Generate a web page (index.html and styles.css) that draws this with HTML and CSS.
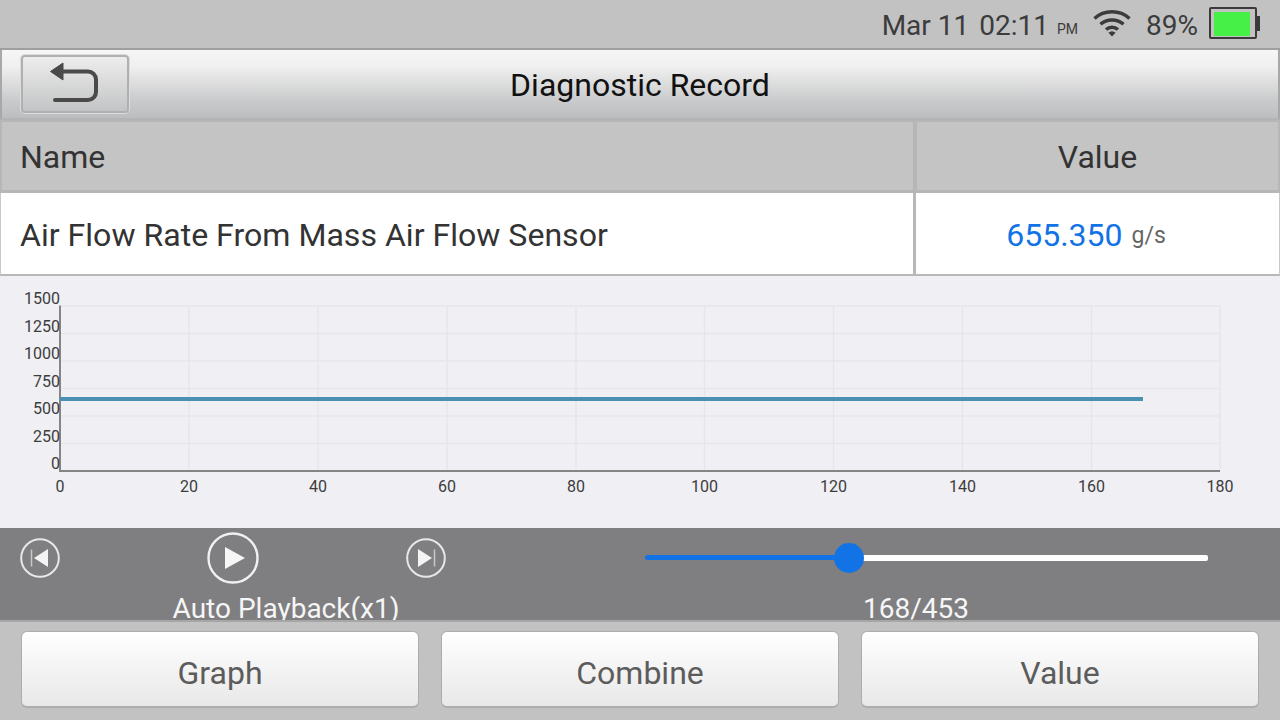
FILE: index.html
```html
<!DOCTYPE html>
<html lang="en">
<head>
<meta charset="utf-8">
<title>Diagnostic Record</title>
<link rel="stylesheet" href="styles.css">
</head>
<body>
<div class="screen">
  <header class="status">
    <span class="date">Mar 11</span>
    <span class="time">02:11</span>
    <span class="ampm">PM</span>
    <svg class="wifi" width="42" height="32" viewBox="0 0 42 32" aria-hidden="true">
      <g fill="none" stroke="#3c3c3c" stroke-width="3.4">
        <path d="M3.5 13.5C13 4.5 29 4.500 38.500 13.500"/>
        <path d="M9.500 19.200C15.500 13.500 26.500 13.500 32.500 19.200"/>
        <path d="M15 24.500C18.500 21.500 23.500 21.500 27 24.500"/>
      </g>
      <path d="M21 32l-3.600-3.800a5 5 0 0 1 7.200 0z" fill="#3c3c3c" transform="translate(0 -.5)"/>
    </svg>
    <span class="pct">89%</span>
    <div class="battery"><div class="battery-fill"></div><div class="battery-cap"></div></div>
  </header>

  <div class="titlebar">
    <button class="back" type="button" aria-label="Back">
      <svg width="52" height="44" viewBox="0 0 52 44" aria-hidden="true">
        <path d="M15 9.500H40a8 8 0 0 1 8 8V30a8 8 0 0 1-8 8H7" fill="none" stroke="#4a4a4a" stroke-width="4" stroke-linecap="round"/>
        <path d="M2.500 9.500L15 1V18z" fill="#4a4a4a" stroke="#4a4a4a" stroke-linejoin="round"/>
      </svg>
    </button>
    <h1 class="title">Diagnostic Record</h1>
  </div>

  <div class="row head">
    <div class="cell name">Name</div>
    <div class="cell val">Value</div>
  </div>
  <div class="row data">
    <div class="cell name">Air Flow Rate From Mass Air Flow Sensor</div>
    <div class="cell val"><span class="num">655.350</span><span class="unit">g/s</span></div>
  </div>

  <section class="chart">
    <svg class="plot" width="1280" height="252" viewBox="0 276 1280 252">
      <g class="grid">
        <path d="M60.500 306H1220M60.500 333.500H1220M60.500 361H1220M60.500 388.500H1220M60.500 416H1220M60.500 443.500H1220"/>
        <path d="M189 306V471M318 306V471M447 306V471M576 306V471M704.500 306V471M833.500 306V471M962.500 306V471M1091.500 306V471M1220 306V471"/>
      </g>
      <path class="axis" d="M60 305.500V471H1220"/>
      <path class="series" d="M60 399H1143"/>
      <g class="ylab">
        <text x="60" y="304">1500</text>
        <text x="60" y="332">1250</text>
        <text x="60" y="359">1000</text>
        <text x="60" y="387">750</text>
        <text x="60" y="414">500</text>
        <text x="60" y="442">250</text>
        <text x="60" y="469">0</text>
      </g>
      <g class="xlab">
        <text x="60" y="492">0</text>
        <text x="189" y="492">20</text>
        <text x="318" y="492">40</text>
        <text x="447" y="492">60</text>
        <text x="576" y="492">80</text>
        <text x="704.500" y="492">100</text>
        <text x="833.500" y="492">120</text>
        <text x="962.500" y="492">140</text>
        <text x="1091.500" y="492">160</text>
        <text x="1220" y="492">180</text>
      </g>
    </svg>
  </section>

  <section class="controls">
    <div class="play-col">
      <div class="icons">
        <svg class="ico" width="40" height="40" viewBox="0 0 40 40" aria-hidden="true">
          <circle cx="20" cy="20" r="18.800" fill="none" stroke="#e8e8e8" stroke-width="2"/>
          <path d="M11.500 11.500V28.500" stroke="#c8c8c8" stroke-width="1.500"/>
          <path d="M28 11L14 20l14 9z" fill="#f4f4f4"/>
        </svg>
        <svg class="ico" width="52" height="52" viewBox="0 0 52 52" aria-hidden="true">
          <circle cx="26" cy="26" r="24.500" fill="none" stroke="#f0f0f0" stroke-width="2.400"/>
          <path d="M18 15V37L38 26z" fill="#f6f6f6"/>
        </svg>
        <svg class="ico" width="40" height="40" viewBox="0 0 40 40" aria-hidden="true">
          <circle cx="20" cy="20" r="18.800" fill="none" stroke="#e8e8e8" stroke-width="2"/>
          <path d="M28.500 11.500V28.500" stroke="#c8c8c8" stroke-width="1.500"/>
          <path d="M12 11l14 9-14 9z" fill="#f4f4f4"/>
        </svg>
      </div>
      <div class="ctl-label">Auto Playback(x1)</div>
    </div>
    <div class="seek-col">
      <div class="slider">
        <div class="track-done"></div>
        <div class="track-left"></div>
        <div class="thumb"></div>
      </div>
      <div class="ctl-label">168/453</div>
    </div>
  </section>

  <footer class="footer">
    <button class="btn" type="button">Graph</button>
    <button class="btn" type="button">Combine</button>
    <button class="btn" type="button">Value</button>
  </footer>
</div>
</body>
</html>
```
FILE: styles.css
```css
* { box-sizing: border-box; }
html, body { margin: 0; padding: 0; }
body { width: 1280px; height: 720px; overflow: hidden; font-family: Roboto, "Liberation Sans", sans-serif; color: #333; }
.screen { width: 1280px; height: 720px; display: flex; flex-direction: column; background: #c2c2c2; }

.status { height: 50px; flex: none; display: flex; align-items: center; padding: 0 21px 0 0; justify-content: flex-end; background: #c2c2c2; color: #3c3c3c; border-bottom: 2px solid #9f9f9f; }
.date { font-size: 28px; margin: 2px 10px 0 0; }
.time { font-size: 28px; margin: 2px 8px 0 0; }
.ampm { font-size: 14px; margin-top: 9px; margin-right: 13px; }
.wifi { margin-right: 13px; margin-top: -7px; }
.pct { font-size: 28px; margin: 2px 11px 0 0; }
.battery { position: relative; width: 48px; height: 32px; border: 2px solid #3a3a3a; border-radius: 2px; padding: 2px 6px 2px 2px; margin-right: 2px; margin-top: -2px; }
.battery-fill { width: 36px; height: 24px; background: #47f047; margin: 1px 0 0 1px; }
.battery-cap { position: absolute; right: -5px; top: 7px; width: 3px; height: 15px; background: #3a3a3a; }

.titlebar { height: 70px; flex: none; display: flex; align-items: center; position: relative; padding: 0 0 2px 21px; background: linear-gradient(#f6f6f6 0%, #efefef 25%, #c9cacb 75%, #bcbdbf 100%); border-bottom: 2px solid #b4b4b4; border-left: 2px solid #a8a8a8; border-right: 2px solid #a8a8a8; }
.back { width: 108px; height: 58px; margin: 2px 0 0 -2px; padding: 0 0 0 25px; display: flex; align-items: center; background: linear-gradient(#ededed, #c3c4c5); border: 2px solid #b0b0b0; border-radius: 4px; box-shadow: 0 0 0 1px #dcdcdc; }
.title { position: absolute; left: 0; right: 0; top: 16px; margin: 0; font-size: 32px; line-height: 38px; font-weight: 400; text-align: center; color: #111; }

.row { display: grid; grid-template-columns: 916px 364px; flex: none; }
.cell { display: flex; align-items: center; font-size: 32px; color: #333; }
.cell.name { padding-left: 20px; }
.cell.val { justify-content: center; }
.head { height: 73px; grid-template-columns: 915px 365px; }
.head .cell { background: #c4c4c4; border: 2px solid #b6b6b6; border-bottom-width: 3px; padding-top: 2px; }
.head .cell.name { padding-left: 18px; }
.data { height: 83px; background: #fff; }
.data .cell { background: #fff; border-bottom: 2px solid #b8b8b8; padding-top: 2px; font-size: 32.100px; }
.data .cell.name { padding-left: 19px; border-left: 1px solid #c8c8c8; border-right: 3px solid #b8b8b8; }
.data .cell.val { border-right: 1px solid #c8c8c8; padding-right: 23px; }
.num { color: #1273e6; font-size: 32px; }
.unit { color: #666; font-size: 23px; margin-left: 9px; margin-top: 1px; }

.chart { height: 252px; flex: none; background: #efeff4; }
.plot { display: block; }
.grid path { stroke: #e6e6ea; stroke-width: 1.500; fill: none; }
.axis { stroke: #858585; stroke-width: 2; fill: none; }
.series { stroke: #4a90b2; stroke-width: 4; fill: none; }
.ylab text { font-size: 16px; fill: #3c3c3c; text-anchor: end; }
.xlab text { font-size: 16px; fill: #3c3c3c; text-anchor: middle; }

.controls { height: 94px; flex: none; display: grid; grid-template-columns: 572px 688px; background: #7f7f81; overflow: hidden; border-bottom: 2px solid #a6a6a6; }
.play-col, .seek-col { display: flex; flex-direction: column; }
.icons { height: 60px; padding-left: 20px; width: 446px; display: flex; align-items: center; justify-content: space-between; }
.ctl-label { margin-top: 5px; height: 34px; line-height: 32px; font-size: 28px; color: #f6f6f6; text-align: center; }
.slider { height: 60px; position: relative; margin-left: 73px; width: 563px; }
.track-done { position: absolute; left: 0; top: 27px; width: 204px; height: 5px; background: #1273e6; border-radius: 3px; }
.track-left { position: absolute; left: 204px; right: 0; top: 27px; height: 6px; background: #fff; border-radius: 2px; }
.thumb { position: absolute; left: 189px; top: 15px; width: 30px; height: 30px; border-radius: 50%; background: #1273e6; }

.footer { flex: 1; display: grid; grid-template-columns: repeat(3, 398px); gap: 22px; padding: 9px 0 12px 21px; background: #c2c2c2; }
.btn { font: inherit; font-size: 32px; color: #5c5c5c; background: linear-gradient(#ffffff, #e8e8e8); border: 1px solid #adadad; border-bottom-width: 2px; border-radius: 6px; padding: 7px 0 0; }
```
